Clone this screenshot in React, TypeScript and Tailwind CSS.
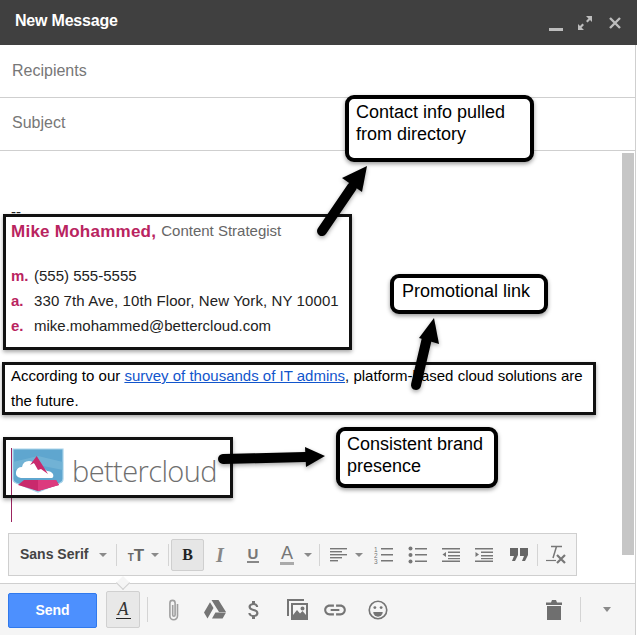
const font = { fontFamily: '"Liberation Sans", Arial, sans-serif' };

function Caret({ className = '' }: { className?: string }) {
  return <div className={`w-0 h-0 border-x-[4px] border-x-transparent border-t-[4px] border-t-[#8a8a8a] ${className}`} />;
}

function Cell({ className, children }: { className: string; children: React.ReactNode }) {
  return <div className={`flex h-full shrink-0 items-center justify-center ${className}`}>{children}</div>;
}

function Sep({ className = '' }: { className?: string }) {
  return <div className={`h-[22px] w-px shrink-0 bg-[#d4d4d4] ${className}`} />;
}

function Lines({ rows }: { rows: [number, number, number][] }) {
  return (
    <svg width="20" height="16" viewBox="0 0 20 16" fill="#777">
      {rows.map(([x, y, w], i) => (
        <rect key={i} x={x} y={y} width={w} height="1.4" />
      ))}
    </svg>
  );
}

function Toolbar() {
  return (
    <div className="ml-2 mt-auto mb-[7px] flex h-[43px] w-[569px] shrink-0 items-center border border-[#cfcfcf] bg-[#f5f5f5] pl-0">
      <Cell className="w-[87px] justify-start pl-[11px] text-[14px] font-bold text-[#444]">Sans Serif</Cell>
      <Cell className="w-[14px]"><Caret /></Cell>
      <Sep className="ml-[6px]" />
      <Cell className="ml-[7px] w-[24px]">
        <span className="mt-[2px] font-bold leading-none text-[#666]"><span className="text-[10px]">T</span><span className="text-[17px]">T</span></span>
      </Cell>
      <Cell className="w-[14px]"><Caret /></Cell>
      <Sep className="ml-[6px]" />
      <div className="ml-[2px] flex h-[32px] w-[33px] shrink-0 items-center justify-center rounded-[2px] border border-[#cfcfcf] bg-[#e6e6e6] font-['Liberation_Serif'] text-[16px] font-bold text-[#222]">B</div>
      <Cell className="w-[32px] font-['Liberation_Serif'] text-[20px] font-bold italic text-[#888]">I</Cell>
      <Cell className="w-[34px]">
        <span className="border-b-2 border-[#888] px-[1px] text-[15px] font-bold leading-[15px] text-[#777]">U</span>
      </Cell>
      <Cell className="w-[34px]">
        <span className="border-b-[3px] border-[#aaa] px-[1px] text-[18px] leading-[17px] text-[#777]">A</span>
      </Cell>
      <Cell className="w-[8px]"><Caret /></Cell>
      <Sep className="ml-[7px]" />
      <Cell className="ml-[5px] w-[26px]">
        <Lines rows={[[2, 1, 17], [2, 4, 12], [2, 7, 17], [2, 10, 12], [2, 13, 8]]} />
      </Cell>
      <Cell className="w-[16px]"><Caret /></Cell>
      <Cell className="w-[34px]">
        <svg width="20" height="18" viewBox="0 0 20 18" fill="#777">
          <text x="0" y="6" fontSize="6.5" fontFamily="Liberation Sans">1</text>
          <text x="0" y="12" fontSize="6.5" fontFamily="Liberation Sans">2</text>
          <text x="0" y="18" fontSize="6.5" fontFamily="Liberation Sans">3</text>
          <rect x="7" y="2" width="12" height="1.5" />
          <rect x="7" y="8" width="12" height="1.5" />
          <rect x="7" y="14" width="12" height="1.5" />
        </svg>
      </Cell>
      <Cell className="w-[34px]">
        <svg width="20" height="18" viewBox="0 0 20 18" fill="#777">
          <circle cx="2.500" cy="2.500" r="2" />
          <circle cx="2.500" cy="9" r="2" />
          <circle cx="2.500" cy="15.500" r="2" />
          <rect x="7" y="2" width="12" height="1.5" />
          <rect x="7" y="8" width="12" height="1.5" />
          <rect x="7" y="14.500" width="12" height="1.5" />
        </svg>
      </Cell>
      <Cell className="w-[32px]">
        <svg width="20" height="16" viewBox="0 0 20 16" fill="#777">
          <rect x="1" y="1" width="18" height="1.5" />
          <rect x="7" y="4.500" width="12" height="1.5" />
          <rect x="7" y="8" width="12" height="1.5" />
          <rect x="1" y="13.500" width="18" height="1.5" />
          <rect x="7" y="11" width="12" height="1.2" />
          <path d="M5 5v5L1.500 7.500z" />
        </svg>
      </Cell>
      <Cell className="w-[34px]">
        <svg width="20" height="16" viewBox="0 0 20 16" fill="#777">
          <rect x="1" y="1" width="18" height="1.5" />
          <rect x="7" y="4.500" width="12" height="1.5" />
          <rect x="7" y="8" width="12" height="1.5" />
          <rect x="1" y="13.500" width="18" height="1.5" />
          <rect x="7" y="11" width="12" height="1.2" />
          <path d="M1.500 5v5L5 7.500z" />
        </svg>
      </Cell>
      <Cell className="w-[36px]">
        <svg width="18" height="13" viewBox="0 0 18 13" fill="#666">
          <path d="M0 0h8v7l-3 6H2l2-5H0zM10 0h8v7l-3 6h-3l2-5h-4z" />
        </svg>
      </Cell>
      <Sep />
      <Cell className="w-[36px]">
        <svg width="22" height="20" viewBox="0 0 22 20" fill="none" stroke="#777">
          <path d="M6 1.500h11M11.500 1.500 8 13" strokeWidth="1.5" />
          <path d="M1 15.500h10" strokeWidth="1.2" />
          <path d="m12 10 8 8M20 10l-8 8" strokeWidth="2.2" />
        </svg>
      </Cell>
    </div>
  );
}

function BottomBar() {
  return (
    <div className="relative flex h-[52px] shrink-0 items-center border-t border-[#cfcfcf] bg-[#f5f5f5] pl-2">
      <div className="absolute -top-[6px] left-[118px] h-[10px] w-[10px] rotate-45 border-b border-r border-[#cfcfcf] bg-[#f5f5f5]" />
      <div className="mt-[1px] flex h-[35px] w-[89px] items-center justify-center rounded-[2px] border border-[#3079ed] bg-[#4d90fe] text-[14px] font-bold text-white">Send</div>
      <div className="ml-[9px] flex h-[37px] w-[34px] items-center justify-center rounded-[2px] border border-[#d0d0d0] bg-[#e8e8e8]">
        <span className="border-b-[1.5px] border-[#222] px-[2px] font-['Liberation_Serif'] text-[18px] italic leading-[18px] text-[#333]">A</span>
      </div>
      <Sep className="ml-[7px] h-[25px]" />
      <Cell className="ml-[6px] w-[40px]">
        <svg width="14" height="24" viewBox="0 0 14 24" fill="none" stroke="#a0a0a0" strokeWidth="1.6">
          <path d="M10.500 6v12a3.800 3.800 0 0 1-7.600 0V5a2.600 2.600 0 0 1 5.200 0v12a1.200 1.200 0 0 1-2.400 0V7" />
        </svg>
      </Cell>
      <Cell className="ml-[1px] w-[40px]">
        <svg width="22" height="19" viewBox="0 0 22 19" fill="#757575">
          <path d="M7.500 0h7l7.500 12h-7zM6 2.200 9.500 8 3.500 18.500 0 12.500zM8 18.500l3.400-6H22l-3.400 6z" />
        </svg>
      </Cell>
      <Cell className="w-[38px]">
        <svg width="24" height="24" viewBox="0 0 24 24" fill="#757575">
          <path d="M11.800 10.900c-2.270-.59-3-1.200-3-2.150 0-1.090 1.010-1.850 2.700-1.850 1.780 0 2.440.85 2.500 2.100h2.210c-.07-1.720-1.120-3.300-3.210-3.810V3h-3v2.160c-1.940.42-3.500 1.680-3.500 3.610 0 2.310 1.910 3.460 4.700 4.130 2.500.6 3 1.480 3 2.410 0 .69-.49 1.790-2.700 1.790-2.060 0-2.870-.92-2.980-2.100h-2.200c.12 2.190 1.760 3.420 3.680 3.830V21h3v-2.150c1.950-.37 3.500-1.500 3.500-3.550 0-2.840-2.430-3.810-4.700-4.400z" />
        </svg>
      </Cell>
      <Cell className="ml-[4px] w-[40px]">
        <svg width="21" height="21" viewBox="0 0 21 21" fill="#757575">
          <path d="M0 0h17v2H2v15H0z" />
          <path fillRule="evenodd" d="M4 4h17v17H4zm2 2v10l4-5 3 3.500 2.500-2.500L19 16V6zM15.500 7.500a2 2 0 1 1 0 4 2 2 0 0 1 0-4z" />
        </svg>
      </Cell>
      <Cell className="w-[36px]">
        <svg width="26" height="26" viewBox="0 0 24 24" fill="#757575">
          <path d="M3.900 12c0-1.710 1.390-3.100 3.100-3.100h4V7H7c-2.760 0-5 2.240-5 5s2.240 5 5 5h4v-1.900H7c-1.710 0-3.100-1.390-3.100-3.100zM8 13h8v-2H8v2zm9-6h-4v1.900h4c1.710 0 3.100 1.390 3.100 3.100s-1.390 3.100-3.100 3.100h-4V17h4c2.760 0 5-2.240 5-5s-2.240-5-5-5z" />
        </svg>
      </Cell>
      <Cell className="ml-[5px] w-[40px]">
        <svg width="20" height="20" viewBox="0 0 21 21">
          <circle cx="10.500" cy="10.500" r="9.200" fill="none" stroke="#757575" strokeWidth="1.700" />
          <circle cx="7.200" cy="8" r="1.500" fill="#757575" />
          <circle cx="13.800" cy="8" r="1.500" fill="#757575" />
          <path d="M5.500 12.500h10a5 5 0 0 1-10 0z" fill="#757575" />
        </svg>
      </Cell>
      <Cell className="ml-auto w-[27px]">
        <svg width="16" height="20" viewBox="0 0 16 20" fill="#6f6f6f">
          <path d="M1 6h14v14H1zM0 2.500h5L6 0h4l1 2.500h5V5H0z" />
        </svg>
      </Cell>
      <Sep className="ml-[13px] h-[25px]" />
      <Cell className="ml-[22px] mr-[24px] w-[8px]"><Caret className="border-x-[4px] border-t-[5px]" /></Cell>
    </div>
  );
}

function Callout({ className, children }: { className: string; children: React.ReactNode }) {
  return (
    <div className={`absolute rounded-[9px] border-[4px] border-black bg-white pl-[7px] text-[18px] leading-[22px] text-black shadow-[0_2px_4px_rgba(0,0,0,0.4)] ${className}`}>
      {children}
    </div>
  );
}

function Logo() {
  return (
    <svg width="52" height="45" viewBox="0 0 52 45">
      <path d="M1 1h50v30q0 3-3 4L26 44 4 35q-3-1-3-4z" fill="#5fa6cf" stroke="#a9d3ea" strokeWidth="1.200" />
      <path d="M1 14 26 8l25 6v8L26 17 1 22z" fill="#7dbad9" opacity="0.6" />
      <path d="M9 30q-6-1-5-6 1-5 6-5 1-6 7-6 3 0 5 2l6 6 3-1 4 3q4 0 6 3 1 3-1 4z" fill="#fff" />
      <path d="M24.700 8 36 26l-7-5-3 1-4-7-4 2z" fill="#c9296c" />
      <path d="M12 32h32l3 5-21 6-20-6z" fill="#c9296c" />
      <path d="M26 32h18l3 5-21 6z" fill="#dc3a7e" />
    </svg>
  );
}

export default function App() {
  return (
    <div className="relative h-[635px] w-[638px] overflow-hidden bg-white" style={font}>
      <div className="flex h-full w-[636px] flex-col border-r border-[#cfcfcf]">
        {/* compose header */}
        <div className="-mr-[2px] flex h-[45px] shrink-0 items-center bg-[#404040] pb-[4px] pl-[15px] pr-[16px] text-white">
          <span className="text-[16px] font-bold tracking-[-0.2px]">New Message</span>
          <div className="ml-auto mt-[4px] flex items-center">
            <div className="mt-[13px] h-[3px] w-[14px] bg-[#bdbdbd]" />
            <svg className="ml-[15px]" width="14" height="14" viewBox="0 0 14 14" fill="#bdbdbd">
              <path d="M8 0h6v6l-2-2-2.500 2.500-1.500-1.500L10.500 2.500zM0 14V8l2 2 2.500-2.500L6 9l-2.500 2.500L6 14z" />
            </svg>
            <svg className="ml-[17px]" width="12" height="12" viewBox="0 0 12 12" stroke="#bdbdbd" strokeWidth="2.400">
              <path d="m1 1 10 10M11 1 1 11" />
            </svg>
          </div>
        </div>

        <div className="flex h-[53px] shrink-0 items-center border-b border-[#cfcfcf] pl-3 text-[16px] text-[#777]">Recipients</div>
        <div className="flex h-[53px] shrink-0 items-center border-b border-[#cfcfcf] pb-[2px] pl-3 text-[16px] text-[#777]">Subject</div>

        {/* body */}
        <div className="flex min-h-0 flex-1">
          <div className="flex min-w-0 flex-1 flex-col">
            <div className="pl-[11px] pt-[53px] text-[15px] text-[#222]">
              <div className="h-4 leading-4">--</div>
              <div className="flex h-[23px] items-center">
                <span className="text-[17px] font-bold tracking-[0.25px] text-[#b9245f]">Mike Mohammed,</span>
                <span className="ml-[5px] text-[#666]">Content Strategist</span>
              </div>
              <div className="mt-[21px] flex h-[25px] items-center"><span className="w-[23px] font-bold text-[#b9245f]">m.</span>(555) 555-5555</div>
              <div className="flex h-[25px] items-center"><span className="w-[23px] font-bold text-[#b9245f]">a.</span><span className="tracking-[0.1px]">330 7th Ave, 10th Floor, New York, NY 10001</span></div>
              <div className="flex h-[25px] items-center"><span className="w-[23px] font-bold text-[#b9245f]">e.</span>mike.mohammed@bettercloud.com</div>
              <div className="mt-[24px] leading-[25px] text-black">
                According to our <span className="text-[#1155cc] underline">survey of thousands of IT admins</span>, platform-based cloud solutions are
                <br />the future.
              </div>
              <div className="mt-[35px] flex items-center">
                <div className="ml-[1px]"><Logo /></div>
                <span className="ml-[8px] font-['Open_Sans'] text-[29px] font-light leading-[45px] tracking-[-0.6px] text-[#6f6f6f]">bettercloud</span>
              </div>
            </div>
            <Toolbar />
          </div>
          <div className="mt-[2px] h-[402px] w-[12px] shrink-0 bg-[#c6c6c6]" />
          <div className="w-px shrink-0" />
        </div>
        <BottomBar />
      </div>

      {/* annotations drawn on top of the screenshot */}
      <div className="absolute left-[11px] top-[448px] h-[74px] w-px bg-[#9b2560]" />
      <div className="absolute left-[3px] top-[214px] h-[136px] w-[349px] border-[3px] border-[#111] shadow-[0_2px_4px_rgba(0,0,0,0.35)]" />
      <div className="absolute left-[2px] top-[362px] h-[53px] w-[594px] border-[3px] border-[#111] shadow-[0_2px_4px_rgba(0,0,0,0.35)]" />
      <div className="absolute left-[3px] top-[437px] h-[61px] w-[230px] border-[3px] border-[#111] shadow-[0_2px_4px_rgba(0,0,0,0.35)]" />

      <Callout className="left-[345px] top-[95px] h-[67px] w-[189px] pt-[2px]">Contact info pulled<br />from directory</Callout>
      <Callout className="left-[390px] top-[274px] h-[40px] w-[158px] pl-[8px] leading-[27px]">Promotional link</Callout>
      <Callout className="left-[336px] top-[427px] h-[61px] w-[162px] pt-[2px]">Consistent brand<br />presence</Callout>

      <svg className="pointer-events-none absolute inset-0 drop-shadow-[0_2px_2px_rgba(0,0,0,0.35)]" width="638" height="635" viewBox="0 0 638 635" fill="#000">
        <path d="M322 231 352 187" stroke="#000" strokeWidth="10" strokeLinecap="round" />
        <path d="M367 166 362 192 342 178z" />
        <path d="M416 385 427 338" stroke="#000" strokeWidth="10" strokeLinecap="round" />
        <path d="M434 318 439 344 419 338z" />
        <path d="M223 459 305 457" stroke="#000" strokeWidth="10" strokeLinecap="round" />
        <path d="M325 456 305 447 306 467z" />
      </svg>
    </div>
  );
}
